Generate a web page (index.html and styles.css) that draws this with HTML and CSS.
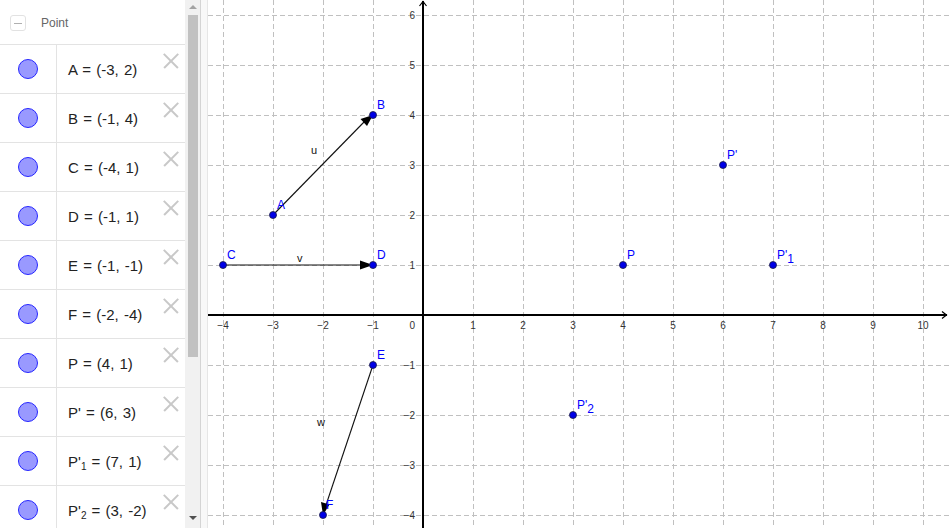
FILE: index.html
```html
<!DOCTYPE html>
<html>
<head>
<meta charset="utf-8">
<link rel="stylesheet" href="styles.css">
</head>
<body>
<div class="app">
  <div class="algebra">
    <div class="list">
      <div class="header">
        <span class="collapse"><span class="minus"></span></span>
        <span class="title">Point</span>
      </div>
      <div class="row"><div class="marble-cell"><span class="marble"></span></div><div class="def"><span class="txt">A = (-3, 2)</span><span class="del"></span></div></div>
      <div class="row"><div class="marble-cell"><span class="marble"></span></div><div class="def"><span class="txt">B = (-1, 4)</span><span class="del"></span></div></div>
      <div class="row"><div class="marble-cell"><span class="marble"></span></div><div class="def"><span class="txt">C = (-4, 1)</span><span class="del"></span></div></div>
      <div class="row"><div class="marble-cell"><span class="marble"></span></div><div class="def"><span class="txt">D = (-1, 1)</span><span class="del"></span></div></div>
      <div class="row"><div class="marble-cell"><span class="marble"></span></div><div class="def"><span class="txt">E = (-1, -1)</span><span class="del"></span></div></div>
      <div class="row"><div class="marble-cell"><span class="marble"></span></div><div class="def"><span class="txt">F = (-2, -4)</span><span class="del"></span></div></div>
      <div class="row"><div class="marble-cell"><span class="marble"></span></div><div class="def"><span class="txt">P = (4, 1)</span><span class="del"></span></div></div>
      <div class="row"><div class="marble-cell"><span class="marble"></span></div><div class="def"><span class="txt">P' = (6, 3)</span><span class="del"></span></div></div>
      <div class="row"><div class="marble-cell"><span class="marble"></span></div><div class="def"><span class="txt">P'<sub>1</sub> = (7, 1)</span><span class="del"></span></div></div>
      <div class="row"><div class="marble-cell"><span class="marble"></span></div><div class="def"><span class="txt">P'<sub>2</sub> = (3, -2)</span><span class="del"></span></div></div>
    </div>
    <div class="scrollbar">
      <span class="arrow-up"></span>
      <div class="thumb"></div>
      <span class="arrow-down"></span>
    </div>
  </div>
  <div class="divider"></div>
  <svg class="graphics" width="742" height="528" viewBox="208 0 742 528" xmlns="http://www.w3.org/2000/svg">
    <rect x="208" y="0" width="742" height="528" fill="#fff"/>
    <g class="grid">
      <line x1="223" y1="0" x2="223" y2="528"/>
      <line x1="273" y1="0" x2="273" y2="528"/>
      <line x1="323" y1="0" x2="323" y2="528"/>
      <line x1="373" y1="0" x2="373" y2="528"/>
      <line x1="473" y1="0" x2="473" y2="528"/>
      <line x1="523" y1="0" x2="523" y2="528"/>
      <line x1="573" y1="0" x2="573" y2="528"/>
      <line x1="623" y1="0" x2="623" y2="528"/>
      <line x1="673" y1="0" x2="673" y2="528"/>
      <line x1="723" y1="0" x2="723" y2="528"/>
      <line x1="773" y1="0" x2="773" y2="528"/>
      <line x1="823" y1="0" x2="823" y2="528"/>
      <line x1="873" y1="0" x2="873" y2="528"/>
      <line x1="923" y1="0" x2="923" y2="528"/>
      <line x1="208" y1="15" x2="950" y2="15"/>
      <line x1="208" y1="65" x2="950" y2="65"/>
      <line x1="208" y1="115" x2="950" y2="115"/>
      <line x1="208" y1="165" x2="950" y2="165"/>
      <line x1="208" y1="215" x2="950" y2="215"/>
      <line x1="208" y1="265" x2="950" y2="265"/>
      <line x1="208" y1="365" x2="950" y2="365"/>
      <line x1="208" y1="415" x2="950" y2="415"/>
      <line x1="208" y1="465" x2="950" y2="465"/>
      <line x1="208" y1="515" x2="950" y2="515"/>
    </g>
    <g class="axes">
      <line x1="423" y1="1" x2="423" y2="528"/>
      <line x1="208" y1="315" x2="947" y2="315"/>
      <polyline points="419.5,6 423,1.5 426.5,6" fill="none"/>
      <polyline points="942,311.5 946.5,315 942,318.5" fill="none"/>
    </g>
    <g class="ticks-x">
      <text x="223" y="329">−4</text>
      <text x="273" y="329">−3</text>
      <text x="323" y="329">−2</text>
      <text x="373" y="329">−1</text>
      <text x="473" y="329">1</text>
      <text x="523" y="329">2</text>
      <text x="573" y="329">3</text>
      <text x="623" y="329">4</text>
      <text x="673" y="329">5</text>
      <text x="723" y="329">6</text>
      <text x="773" y="329">7</text>
      <text x="823" y="329">8</text>
      <text x="873" y="329">9</text>
      <text x="923" y="329">10</text>
    </g>
    <g class="ticks-y">
      <text x="415" y="329">0</text>
      <text x="415" y="19">6</text>
      <text x="415" y="69">5</text>
      <text x="415" y="119">4</text>
      <text x="415" y="169">3</text>
      <text x="415" y="219">2</text>
      <text x="415" y="269">1</text>
      <text x="415" y="369">−1</text>
      <text x="415" y="419">−2</text>
      <text x="415" y="469">−3</text>
      <text x="415" y="519">−4</text>
    </g>
    <g class="vectors">
      <line x1="273" y1="215" x2="365" y2="121"/>
      <polygon points="373,115 360.5,119 367,126" />
      <line x1="223" y1="265" x2="362" y2="265"/>
      <polygon points="373,265 360,260.5 360,269.5" />
      <line x1="373" y1="365" x2="326" y2="505"/>
      <polygon points="323,515 321,502 329.5,504.5" />
    </g>
    <g class="vlabels">
      <text x="311" y="154">u</text>
      <text x="297" y="262">v</text>
      <text x="317" y="426">w</text>
    </g>
    <g class="points">
      <circle cx="273" cy="215" r="3.5"/>
      <circle cx="373" cy="115" r="3.5"/>
      <circle cx="223" cy="265" r="3.5"/>
      <circle cx="373" cy="265" r="3.5"/>
      <circle cx="373" cy="365" r="3.5"/>
      <circle cx="323" cy="515" r="3.5"/>
      <circle cx="623" cy="265" r="3.5"/>
      <circle cx="723" cy="165" r="3.5"/>
      <circle cx="773" cy="265" r="3.5"/>
      <circle cx="573" cy="415" r="3.5"/>
    </g>
    <g class="plabels">
      <text x="277" y="209">A</text>
      <text x="377" y="109">B</text>
      <text x="227" y="259">C</text>
      <text x="377" y="259">D</text>
      <text x="377" y="359">E</text>
      <text x="326" y="509">F</text>
      <text x="627" y="259">P</text>
      <text x="727" y="159">P'</text>
      <text x="777" y="259">P'<tspan dy="4">1</tspan></text>
      <text x="577" y="409">P'<tspan dy="4">2</tspan></text>
    </g>
  </svg>
</div>
</body>
</html>
```

FILE: styles.css
```css
html, body {
  margin: 0;
  padding: 0;
  width: 950px;
  height: 528px;
  overflow: hidden;
  background: #fff;
  font-family: "Liberation Sans", Arial, sans-serif;
}

.app {
  display: flex;
  width: 950px;
  height: 528px;
  overflow: hidden;
}

.algebra {
  display: flex;
  width: 200px;
  height: 528px;
  flex: none;
}

.list {
  width: 185px;
  height: 528px;
  overflow: hidden;
  flex: none;
}

.header {
  height: 44px;
  border-bottom: 1px solid #e3e3e3;
  display: flex;
  align-items: center;
  padding-left: 10px;
}

.collapse {
  width: 14px;
  height: 14px;
  border: 1px solid #e2e2e2;
  border-radius: 3px;
  display: flex;
  align-items: center;
  justify-content: center;
  margin-top: 2px;
}

.minus {
  width: 8px;
  height: 1px;
  background: #b0b0b0;
}

.title {
  margin-left: 15px;
  font-size: 12px;
  color: #666;
  margin-top: 1px;
}

.row {
  display: flex;
  height: 48px;
  border-bottom: 1px solid #e3e3e3;
}

.marble-cell {
  width: 56px;
  border-right: 1px solid #e3e3e3;
  display: flex;
  align-items: center;
  justify-content: center;
  flex: none;
}

.marble {
  width: 18px;
  height: 18px;
  border-radius: 50%;
  background: #9999ff;
  border: 1px solid #2626ff;
}

.def {
  position: relative;
  flex: 1;
  display: flex;
  align-items: center;
  padding-left: 11px;
  font-size: 15px;
  color: #222;
}

.txt {
  white-space: pre;
  word-spacing: 1px;
}

.txt sub {
  font-size: 10px;
  vertical-align: -3px;
  line-height: 0;
}

.del {
  position: absolute;
  right: 7px;
  top: 8px;
  width: 15px;
  height: 15px;
}

.del::before, .del::after {
  content: "";
  position: absolute;
  left: -2px;
  top: 7px;
  width: 20px;
  height: 1.5px;
  background: #c8c8c8;
  transform: rotate(45deg);
}

.del::after {
  transform: rotate(-45deg);
}

.scrollbar {
  width: 15px;
  height: 528px;
  background: #f1f1f1;
  display: flex;
  flex-direction: column;
  align-items: center;
  flex: none;
}

.arrow-up {
  width: 0;
  height: 0;
  border-left: 4px solid transparent;
  border-right: 4px solid transparent;
  border-bottom: 4px solid #a3a3a3;
  margin-top: 5px;
}

.thumb {
  width: 10px;
  height: 342px;
  background: #c1c1c1;
  margin-top: 6px;
}

.arrow-down {
  width: 0;
  height: 0;
  border-left: 4px solid transparent;
  border-right: 4px solid transparent;
  border-top: 4px solid #505050;
  margin-top: auto;
  margin-bottom: 8px;
}

.divider {
  width: 6px;
  height: 528px;
  background: #f8f8f8;
  border-left: 1px solid #d4d4d4;
  border-right: 1px solid #e6e6e6;
  flex: none;
}

.graphics {
  display: block;
  flex: none;
}

.grid line {
  stroke: #c0c0c0;
  stroke-width: 1;
  stroke-dasharray: 5 3;
  shape-rendering: crispEdges;
}

.axes line, .axes polyline {
  stroke: #000;
  stroke-width: 1.2;
}

.axes line {
  shape-rendering: crispEdges;
}

.ticks-x text {
  font-size: 10px;
  fill: #333;
  text-anchor: middle;
  font-family: "Liberation Sans", Arial, sans-serif;
}

.ticks-y text {
  font-size: 10px;
  fill: #333;
  text-anchor: end;
  font-family: "Liberation Sans", Arial, sans-serif;
}

.vectors line {
  stroke: #111;
  stroke-width: 1.1;
}

.vectors polygon {
  fill: #000;
}

.vlabels text {
  font-size: 11px;
  fill: #111;
  font-family: "Liberation Sans", Arial, sans-serif;
}

.points circle {
  fill: #0000e6;
  stroke: #1a1a40;
  stroke-width: 0.8;
}

.plabels text {
  font-size: 12px;
  fill: #0000ff;
  font-family: "Liberation Sans", Arial, sans-serif;
}
```
